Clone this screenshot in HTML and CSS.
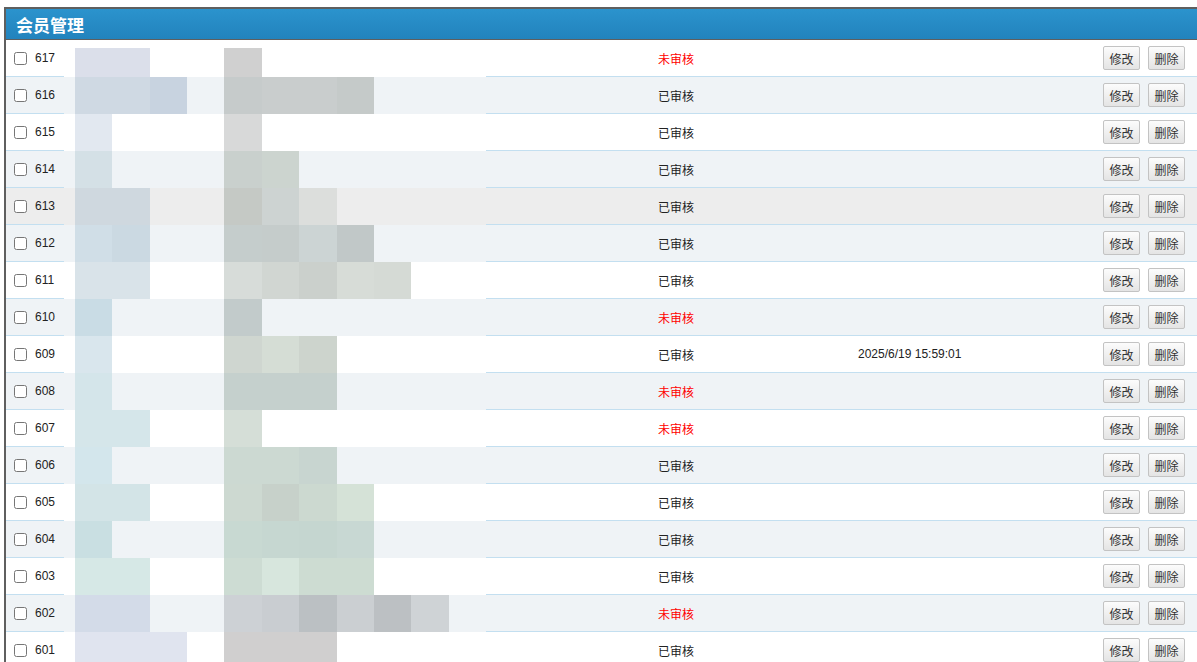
FILE: index.html
```html
<!DOCTYPE html>
<html lang="zh-CN">
<head>
  <meta charset="UTF-8" />
  <title>会员管理</title>
  <link rel="stylesheet" href="styles.css">
</head>
<body>
<div class="panel">
  <div class="panel-title">会员管理</div>
  <div id="member-list" class="member-list"></div>
</div>

<script>
  // 会员列表 (姓名/电话 列已打码, 用色块代替)
  const members = [
    { id: 617, ok: false, blocks: ['#dbdfea', '#dbdfea', 0, 0, '#d0d0d0'] },
    { id: 616, ok: true, blocks: ['#cfd9e3', '#cfd9e3', '#c8d3e0', 0, '#c6cbcb', '#c9cdcd', '#c9cdcd', '#c5cac9'] },
    { id: 615, ok: true, blocks: ['#e2e8f0', 0, 0, 0, '#d8d9d9'] },
    { id: 614, ok: true, blocks: ['#d4e0e6', 0, 0, 0, '#c9d0cd', '#ccd4cf'] },
    { id: 613, ok: true, hover: true, blocks: ['#cfd8df', '#cfd8df', 0, 0, '#c5c9c5', '#cdd3d2', '#dcdedc'] },
    { id: 612, ok: true, blocks: ['#d0dee7', '#cbd9e2', 0, 0, '#c5cdcc', '#c5cccb', '#ccd4d4', '#c1c8c8'] },
    { id: 611, ok: true, blocks: ['#d9e3e9', '#d9e3e9', 0, 0, '#d7dcd9', '#d1d6d2', '#cbd0cc', '#d7dcd7', '#d5dad5'] },
    { id: 610, ok: false, blocks: ['#c9dce5', 0, 0, 0, '#c2cbcb'] },
    { id: 609, ok: true, date: '2025/6/19 15:59:01', blocks: ['#d9e6ed', 0, 0, 0, '#cfd6d0', '#d5ddd5', '#cdd4cd'] },
    { id: 608, ok: false, blocks: ['#d4e5ea', 0, 0, 0, '#c5d0cd', '#c5d0cd', '#c5d0cd'] },
    { id: 607, ok: false, blocks: ['#d5e6ea', '#d5e6ea', 0, 0, '#d5ded7'] },
    { id: 606, ok: true, blocks: ['#d3e6ec', 0, 0, 0, '#ccd9d2', '#ccd9d2', '#c8d5d0'] },
    { id: 605, ok: true, blocks: ['#d3e4e7', '#d3e4e7', 0, 0, '#cdd9d1', '#c7d1ca', '#ccd9d0', '#d5e2d7'] },
    { id: 604, ok: true, blocks: ['#c9dfe2', 0, 0, 0, '#c8d9d2', '#c6d7d1', '#c5d6d0', '#c8d8d3'] },
    { id: 603, ok: true, blocks: ['#d6e8e6', '#d6e8e6', 0, 0, '#cddcd3', '#d7e6dd', '#cddcd2', '#cddcd2'] },
    { id: 602, ok: false, blocks: ['#d3dbe8', '#d3dbe8', 0, 0, '#cdd1d5', '#c9cdd1', '#bbc0c3', '#cbcfd2', '#bcc0c3', '#cfd3d6'] },
    { id: 601, ok: true, blocks: ['#e0e4ef', '#e0e4ef', '#e0e4ef', 0, '#d0cfcf', '#d0cfcf', '#d0cfcf'] }
  ];

  const list = document.getElementById('member-list');

  members.forEach((m, i) => {
    const row = document.createElement('div');
    row.className = 'member-row';
    if (i % 2 === 1) row.classList.add('alt');
    if (m.hover) row.classList.add('hover');
    if (i === 0) row.classList.add('first');

    let cells = '';
    for (let k = 0; k < 11; k++) {
      const c = m.blocks[k];
      cells += c ? '<span class="blk" style="background:' + c + '"></span>' : '<span class="blk"></span>';
    }

    row.innerHTML =
      '<div class="cell cell-id"><input type="checkbox" /><span>' + m.id + '</span></div>' +
      '<div class="cell-mosaic">' + cells + '</div>' +
      '<div class="cell cell-status ' + (m.ok ? '' : 'pending') + '">' + (m.ok ? '已审核' : '未审核') + '</div>' +
      '<div class="cell cell-date">' + (m.date || '') + '</div>' +
      '<div class="cell cell-ops"><button class="btn">修改</button><button class="btn">删除</button></div>';

    list.appendChild(row);
  });
</script>
</body>
</html>
```

FILE: styles.css
```css
* { box-sizing: border-box; margin: 0; padding: 0; }
body {
  font-family: 'Liberation Sans', Arial, 'Noto Sans CJK SC', sans-serif;
  font-size: 12px;
  color: #222;
  background: #fff;
  overflow: hidden;
}
.panel {
  margin: 7px 0 0 4px;
  border: 2px solid #5f5f5f;
  border-right: none;
  border-bottom: none;
}
.panel-title {
  height: 31px;
  line-height: 31px;
  padding-left: 10px;
  background: linear-gradient(to bottom, #2b93cd, #2283bd);
  border-bottom: 1px solid #5f5f5f;
  color: #fff;
  font-family: 'Noto Sans CJK SC', sans-serif;
  font-size: 17px;
  font-weight: bold;
}

.member-row {
  display: flex;
  height: 37px;
  background: #fff;
}
.member-row.alt {
  background: #eff3f6;
}
.member-row.hover {
  background: #ededed;
}
.cell {
  display: flex;
  align-items: center;
  border-bottom: 1px solid #c3dff0;
}
.cell-id {
  width: 58px;
  padding-left: 8px;
  gap: 8px;
}
.cell-id input {
  width: 13px;
  height: 13px;
  margin: 0;
}

/* 打码区域 */
.cell-mosaic {
  width: 422px;
  padding-left: 11px;
  display: grid;
  grid-template-columns: repeat(11, 1fr);
}
.member-row.first .cell-mosaic {
  padding-top: 8px;
}

.cell-status {
  width: 372px;
  padding-left: 8px;
  justify-content: center;
  font-family: 'Noto Sans CJK SC', sans-serif;
}
.cell-status.pending {
  color: #f00;
}
.cell-date {
  flex: 1;
}
.cell-ops {
  padding-right: 12px;
  gap: 8px;
}
.btn {
  width: 37px;
  height: 24px;
  border: 1px solid #c3c3c3;
  border-radius: 2px;
  background: linear-gradient(to bottom, #fcfcfc, #e4e4e4);
  font-family: 'Noto Sans CJK SC', sans-serif;
  font-size: 12px;
  color: #333;
  cursor: pointer;
}
```
